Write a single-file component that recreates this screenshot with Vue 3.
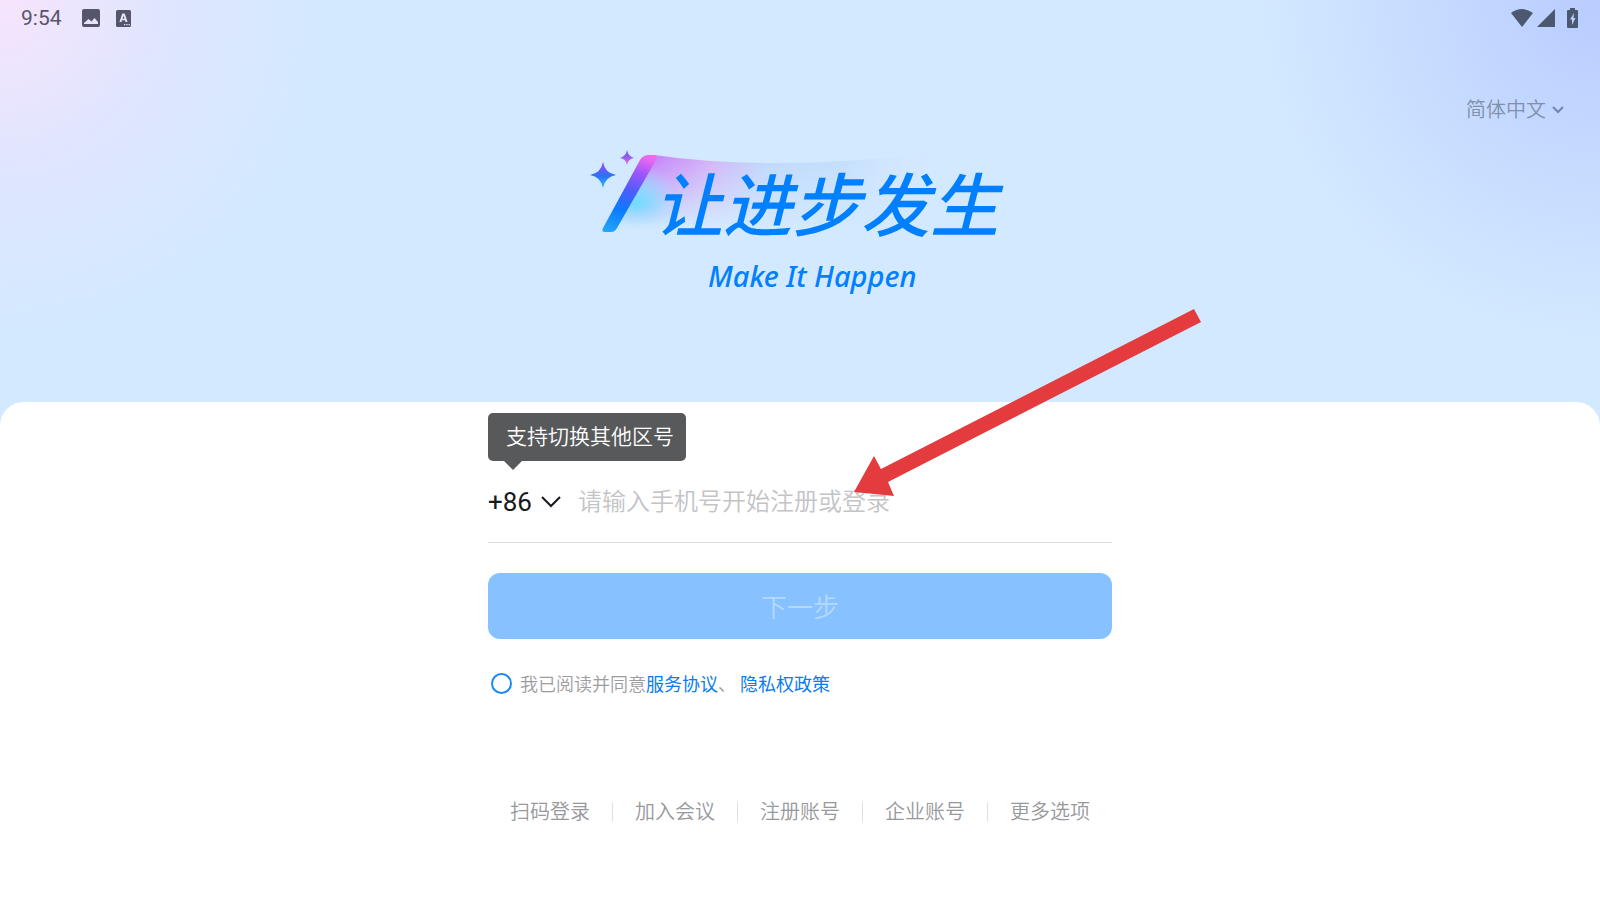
<script setup>
  import { ref, computed } from 'vue'

  // selected language
  const lang = ref('简体中文')
  const langs = ['简体中文', 'English', '日本語']

  // phone number and its area code
  const code = ref('+86')
  const codes = ['+86', '+852', '+853', '+886']
  const phone = ref('')

  // whether the terms were accepted
  const agreed = ref(false)
  const ready = computed(() => agreed.value && phone.value.length > 0)

  // links at the bottom
  const options = ['扫码登录', '加入会议', '注册账号', '企业账号', '更多选项']
</script>

<template>
  <div class="page">
    <!-- status bar -->
    <div class="status">
      <div class="status-side">
        <span class="time">9:54</span>
        <svg class="icon-image" width="18" height="18" viewBox="0 0 18 18">
          <path fill-rule="evenodd" d="M2 0h14a2 2 0 0 1 2 2v14a2 2 0 0 1-2 2H2a2 2 0 0 1-2-2V2a2 2 0 0 1 2-2zM2 15h14v-2l-3.500-4-3 3.500L6.500 10 2 14z" />
        </svg>
        <svg width="15" height="17" viewBox="0 0 15 17">
          <path fill-rule="evenodd" d="M1.500 0h12A1.500 1.500 0 0 1 15 1.500v14a1.500 1.500 0 0 1-1.500 1.500h-12A1.500 1.500 0 0 1 0 15.500v-14A1.500 1.500 0 0 1 1.500 0zM6.300 3.500L3.400 12h2.100l.5-1.700h3L9.500 12h2.100L8.700 3.500zM7.500 5.700l.9 3H6.600zM8 14v1.300h1.300V14zm2.300 0v1.300h1.300V14zm2.300 0v1.300h1.300V14z" />
        </svg>
      </div>
      <div class="status-side right">
        <svg width="22" height="18" viewBox="0 0 22 18">
          <path d="M0 4Q11-4 22 4L11 18z" />
        </svg>
        <svg width="18" height="18" viewBox="0 0 18 18">
          <path d="M18 0v18H0z" />
        </svg>
        <svg class="icon-battery" width="11" height="20" viewBox="0 0 11 20">
          <path fill-rule="evenodd" d="M3 0h5v2h2a1 1 0 0 1 1 1v16a1 1 0 0 1-1 1H1a1 1 0 0 1-1-1V3a1 1 0 0 1 1-1h2zM7 5L3 11.500h2V17l3.500-7H6.500z" />
        </svg>
      </div>
    </div>

    <!-- banner -->
    <header class="hero">
      <label class="lang">
        <select v-model="lang" aria-label="语言">
          <option v-for="l in langs" :key="l">{{ l }}</option>
        </select>
        <svg width="12" height="8" viewBox="0 0 12 8">
          <path d="M1 1l5 5 5-5" />
        </svg>
      </label>
      <div class="brand">
        <svg class="wand" width="350" height="88" viewBox="0 0 350 88">
          <defs>
            <linearGradient id="stick" x1="50" y1="4" x2="20" y2="84" gradientUnits="userSpaceOnUse">
              <stop offset="0" stop-color="#f06af0" />
              <stop offset=".22" stop-color="#9a55fa" />
              <stop offset=".45" stop-color="#4c5cfb" />
              <stop offset=".7" stop-color="#0a7cff" />
              <stop offset="1" stop-color="#25a8f8" />
            </linearGradient>
            <linearGradient id="star" x1="0" y1="0" x2="0" y2="1">
              <stop offset=".1" stop-color="#8a50f5" />
              <stop offset=".55" stop-color="#2872f5" />
              <stop offset="1" stop-color="#32c0f5" />
            </linearGradient>
            <linearGradient id="star-small" x1="0" y1="0" x2="0" y2="1">
              <stop offset="0" stop-color="#5868f5" />
              <stop offset=".5" stop-color="#9a5bee" />
              <stop offset="1" stop-color="#f078d0" />
            </linearGradient>
            <linearGradient id="trail" x1="60" y1="0" x2="340" y2="0" gradientUnits="userSpaceOnUse">
              <stop offset="0" stop-color="#c683fa" />
              <stop offset=".22" stop-color="#d4b4f6" />
              <stop offset=".42" stop-color="#bfd9fc" />
              <stop offset=".7" stop-color="#c5defc" />
              <stop offset="1" stop-color="#d3e9ff" stop-opacity="0" />
            </linearGradient>
            <radialGradient id="glow" cx="46" cy="56" r="44" gradientUnits="userSpaceOnUse">
              <stop offset="0" stop-color="#6adcff" />
              <stop offset=".4" stop-color="#85dcff" stop-opacity=".8" />
              <stop offset="1" stop-color="#a8dfff" stop-opacity="0" />
            </radialGradient>
            <linearGradient id="fade" x1="0" y1="0" x2="0" y2="1">
              <stop offset=".1" stop-color="#fff" />
              <stop offset=".85" stop-color="#000" />
            </linearGradient>
            <mask id="trail-mask">
              <rect width="350" height="88" fill="url(#fade)" />
            </mask>
            <mask id="glow-mask">
              <rect width="350" height="88" fill="url(#glow-fade)" />
            </mask>
            <linearGradient id="glow-fade" x1="0" y1="0" x2="0" y2="1">
              <stop offset=".6" stop-color="#fff" />
              <stop offset=".92" stop-color="#000" />
            </linearGradient>
          </defs>
          <g mask="url(#trail-mask)">
            <path fill="url(#trail)" d="M64 5Q180 22 345 3L300 86H22z" />
          </g>
          <g mask="url(#glow-mask)">
            <path fill="url(#glow)" d="M64 5Q84 9 110 11V86H24z" />
          </g>
          <path fill="url(#stick)" d="M57 5h8q3 1 1 5L27 78q-2 4-6 4h-6q-4 0-2-4L50 10q2-4 7-5z" />
          <path fill="url(#star)" d="M13 12Q15 23 26 25Q15 27 13 38Q11 27 0 25Q11 23 13 12z" />
          <path fill="url(#star-small)" d="M37 0Q38 6 44 8Q38 9 37 15Q36 9 30 8Q36 6 37 0z" />
        </svg>
        <h1>让进步发生</h1>
        <p>Make It Happen</p>
      </div>
    </header>

    <!-- login sheet -->
    <main class="sheet">
      <form class="login" @submit.prevent>
        <div class="tip">支持切换其他区号</div>
        <div class="phone">
          <label class="code">
            <select v-model="code" aria-label="区号">
              <option v-for="c in codes" :key="c">{{ c }}</option>
            </select>
            <svg width="20" height="12" viewBox="0 0 20 12">
              <path d="M1 1l9 9 9-9" />
            </svg>
          </label>
          <input v-model="phone" type="tel" aria-label="手机号" placeholder="请输入手机号开始注册或登录">
        </div>
        <button class="next" :disabled="!ready">下一步</button>
        <div class="agree">
          <input id="agree" v-model="agreed" type="checkbox">
          <label for="agree">我已阅读并同意</label>
          <a href="#">服务协议</a>
          <span class="comma">、</span>
          <a href="#">隐私权政策</a>
        </div>
        <!-- arrow pointing at the phone field -->
        <svg class="arrow" width="347" height="187" viewBox="0 0 347 187">
          <path d="M0 183L20 147L27 160L340 0L347 13L34 173L40 187z" />
        </svg>
      </form>

      <nav class="options">
        <a v-for="o in options" :key="o" href="#">{{ o }}</a>
      </nav>
    </main>
  </div>
</template>

<style>
  body {
    margin: 0;
  }
</style>

<style scoped>
  * {
    box-sizing: border-box;
  }
  .page {
    min-height: 100vh;
    display: flex;
    flex-direction: column;
    font-family: Roboto, "Noto Sans CJK SC", sans-serif;
    font-weight: 350;
    background:
      radial-gradient(ellipse 320px 330px at 0 0, #f7e4fd, rgba(229, 228, 254, 0.7) 50%, rgba(211, 233, 255, 0)),
      radial-gradient(ellipse 340px 340px at 100% 0, #b8ccff, rgba(188, 209, 255, 0.7) 40%, rgba(211, 233, 255, 0)),
      #d3e9ff;
  }
  a {
    text-decoration: none;
  }
  select, input, button {
    font: inherit;
    color: inherit;
    border: none;
    outline: none;
    background: none;
    padding: 0;
    margin: 0;
  }
  select {
    appearance: none;
    field-sizing: content;
  }

  /* status bar */
  .status {
    height: 36px;
    padding: 0 22px 0 21px;
    display: flex;
    justify-content: space-between;
    align-items: center;
    fill: #55566b;
    color: #55566b;
  }
  .status-side {
    display: flex;
    align-items: center;
    gap: 16px;
  }
  .status-side.right {
    gap: 4px;
    fill: #4c5870;
  }
  .time {
    font-size: 21px;
    font-weight: 400;
  }
  .icon-image {
    margin-left: 4px;
  }
  .icon-battery {
    margin-left: 8px;
  }

  /* banner */
  .hero {
    display: flex;
    flex-direction: column;
    align-items: center;
    padding: 58px 36px 102px;
  }
  .lang {
    align-self: flex-end;
    display: flex;
    align-items: center;
    gap: 6px;
    height: 32px;
    font-size: 20px;
    color: #7f8fac;
  }
  .lang svg {
    fill: none;
    stroke: #7385a8;
    stroke-width: 2;
  }
  .brand {
    position: relative;
    width: 420px;
    margin-top: 24px;
    padding-left: 64px;
    color: #0080ff;
  }
  .wand {
    position: absolute;
    left: 0;
    top: 0;
  }
  .brand h1 {
    position: relative;
    margin: 0;
    padding-top: 14px;
    font-size: 69px;
    line-height: 88px;
    font-weight: 500;
    font-style: italic;
    white-space: nowrap;
  }
  .brand p {
    margin: 3px 0 3px 54px;
    font-family: "Noto Sans", sans-serif;
    font-size: 29px;
    line-height: 42px;
    font-weight: 500;
    font-style: italic;
    white-space: nowrap;
  }

  /* login sheet */
  .sheet {
    flex: 1;
    display: flex;
    flex-direction: column;
    align-items: center;
    gap: 104px;
    padding: 60px 24px;
    background: #fff;
    border-radius: 24px 24px 0 0;
  }
  .login {
    position: relative;
    width: 100%;
    max-width: 624px;
  }
  .tip {
    position: absolute;
    left: 0;
    top: -49px;
    height: 48px;
    padding: 0 12px 0 18px;
    font-size: 21px;
    line-height: 48px;
    color: #fff;
    background: #58595b;
    border-radius: 5px;
  }
  .tip::after {
    content: "";
    position: absolute;
    left: 16px;
    top: 100%;
    border: 9px solid transparent;
    border-top-color: #58595b;
    border-bottom: none;
  }
  .phone {
    display: flex;
    align-items: center;
    gap: 17px;
    height: 81px;
    border-bottom: 1px solid #dedfe1;
  }
  .code {
    display: flex;
    align-items: center;
    gap: 9px;
    font-size: 26px;
    font-weight: 400;
    color: #17191c;
  }
  .code svg {
    fill: none;
    stroke: #17191c;
    stroke-width: 2;
  }
  .phone input {
    flex: 1;
    font-size: 24px;
  }
  .phone input::placeholder {
    color: #c3c4c6;
  }
  .next {
    display: block;
    width: 100%;
    height: 66px;
    margin-top: 30px;
    padding-bottom: 2px;
    font-size: 26px;
    color: #fff;
    background: #0080ff;
    border-radius: 12px;
  }
  .next:disabled {
    color: #b5daff;
    background: #87c1ff;
  }
  .agree {
    display: flex;
    align-items: center;
    height: 30px;
    margin-top: 29px;
    padding-left: 3px;
    font-size: 18px;
    color: #9b9da0;
  }
  .agree input {
    appearance: none;
    width: 21px;
    height: 21px;
    margin-right: 8px;
    border: 2px solid #1a88f0;
    border-radius: 50%;
  }
  .agree input:checked {
    background: #1a88f0;
  }
  .agree a {
    color: #0a7cf0;
    font-weight: 400;
  }
  .comma {
    margin-right: 4px;
  }
  .arrow {
    position: absolute;
    left: 366px;
    top: -153px;
    fill: #e43c3e;
    pointer-events: none;
  }

  /* bottom links */
  .options {
    display: flex;
    font-size: 20px;
    line-height: 20px;
  }
  .options a {
    padding: 0 22px;
    color: #97999c;
  }
  .options a + a {
    border-left: 1px solid #e0e1e3;
  }
</style>
